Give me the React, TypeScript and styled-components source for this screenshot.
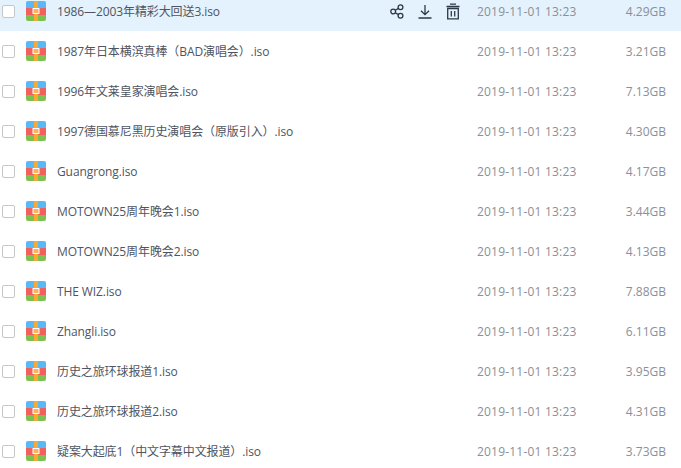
import { createGlobalStyle } from 'styled-components';
import styled from 'styled-components';

const files = [
    { name: '1986—2003年精彩大回送3.iso', size: '4.29GB' },
    { name: '1987年日本横滨真棒（BAD演唱会）.iso', size: '3.21GB' },
    { name: '1996年文莱皇家演唱会.iso', size: '7.13GB' },
    { name: '1997德国慕尼黑历史演唱会（原版引入）.iso', size: '4.30GB' },
    { name: 'Guangrong.iso', size: '4.17GB' },
    { name: 'MOTOWN25周年晚会1.iso', size: '3.44GB' },
    { name: 'MOTOWN25周年晚会2.iso', size: '4.13GB' },
    { name: 'THE WIZ.iso', size: '7.88GB' },
    { name: 'Zhangli.iso', size: '6.11GB' },
    { name: '历史之旅环球报道1.iso', size: '3.95GB' },
    { name: '历史之旅环球报道2.iso', size: '4.31GB' },
    { name: '疑案大起底1（中文字幕中文报道）.iso', size: '3.73GB' },
];

const GlobalStyle = createGlobalStyle`
  html, body {
    margin: 0;
    padding: 0;
    height: 100%;
    overflow: hidden;
    background: #fff;
  }
`;

const List = styled.div`
  height: 468px;
  overflow: hidden;
  font-family: "Open Sans", "Noto Sans CJK SC", sans-serif;
  font-size: 12px;
`;

const Rows = styled.div`
  margin-top: -9px;
`;

const Row = styled.div<{ $active?: boolean }>`
  display: flex;
  align-items: center;
  height: 40px;
  background: ${({ $active }) => ($active ? '#e3f2fc' : '#fff')};
`;

const Check = styled.span`
  box-sizing: border-box;
  flex: none;
  width: 13px;
  height: 13px;
  margin-left: 2px;
  background: #fff;
  border: 1px solid #c6c6c6;
  border-radius: 2px;
`;

const Icon = styled.svg`
  flex: none;
  width: 20px;
  height: 20px;
  margin-left: 11px;
`;

const Name = styled.span`
  flex: 1;
  min-width: 0;
  margin-left: 11px;
  color: #4f5460;
  letter-spacing: -0.1px;
  white-space: nowrap;
`;

const Actions = styled.div`
  display: flex;
  align-items: center;
  gap: 12px;
  margin-right: 16px;
`;

const ActionIcon = styled.svg`
  width: 16px;
  height: 17px;
  fill: none;
  stroke: #2f3848;
  stroke-width: 1.3;
`;

const Time = styled.span`
  flex: none;
  width: 120px;
  color: #8a8f99;
  letter-spacing: 0.2px;
  white-space: nowrap;
`;

const Size = styled.span`
  flex: none;
  width: 69px;
  padding-right: 15px;
  color: #8a8f99;
  text-align: right;
`;

const ArchiveIcon = () => (
    <Icon viewBox="0 0 20 20">
        <path d="M2 0h16a2 2 0 0 1 2 2v5H0V2a2 2 0 0 1 2-2z" fill="#5ab9f5" />
        <rect y="7" width="20" height="7" fill="#f0605c" />
        <path d="M0 14h20v4a2 2 0 0 1-2 2H2a2 2 0 0 1-2-2z" fill="#7cc14f" />
        <rect x="8" width="4" height="20" fill="#f5a93b" />
        <rect x="7" y="7.5" width="6" height="5" fill="#f5b45e" stroke="#fff" strokeWidth="1" />
    </Icon>
);

const RowActions = () => (
    <Actions>
        <ActionIcon viewBox="0 0 16 17">
            <circle cx="4.2" cy="8.5" r="2.4" />
            <circle cx="11.5" cy="4.2" r="2.4" />
            <circle cx="11.5" cy="12.8" r="2.4" />
            <path d="M6.3 7.3l3.1-1.9M6.3 9.7l3.1 1.9" />
        </ActionIcon>
        <ActionIcon viewBox="0 0 16 17">
            <path d="M8 2v9.5M4 7.8l4 3.8 4-3.8M1.5 15h13" />
        </ActionIcon>
        <ActionIcon viewBox="0 0 16 17">
            <path d="M1.5 3.5h13M5 1.2h6M2.7 5.5h10.6v10.3H2.7zM6.3 8v5.5M9.7 8v5.5" />
        </ActionIcon>
    </Actions>
);

export default function App() {
    return (
        <List>
            <GlobalStyle />
            <Rows>
                {files.map((file, index) => (
                    <Row key={file.name} $active={index === 0}>
                        <Check />
                        <ArchiveIcon />
                        <Name>{file.name}</Name>
                        {index === 0 && <RowActions />}
                        <Time>2019-11-01 13:23</Time>
                        <Size>{file.size}</Size>
                    </Row>
                ))}
            </Rows>
        </List>
    );
}
